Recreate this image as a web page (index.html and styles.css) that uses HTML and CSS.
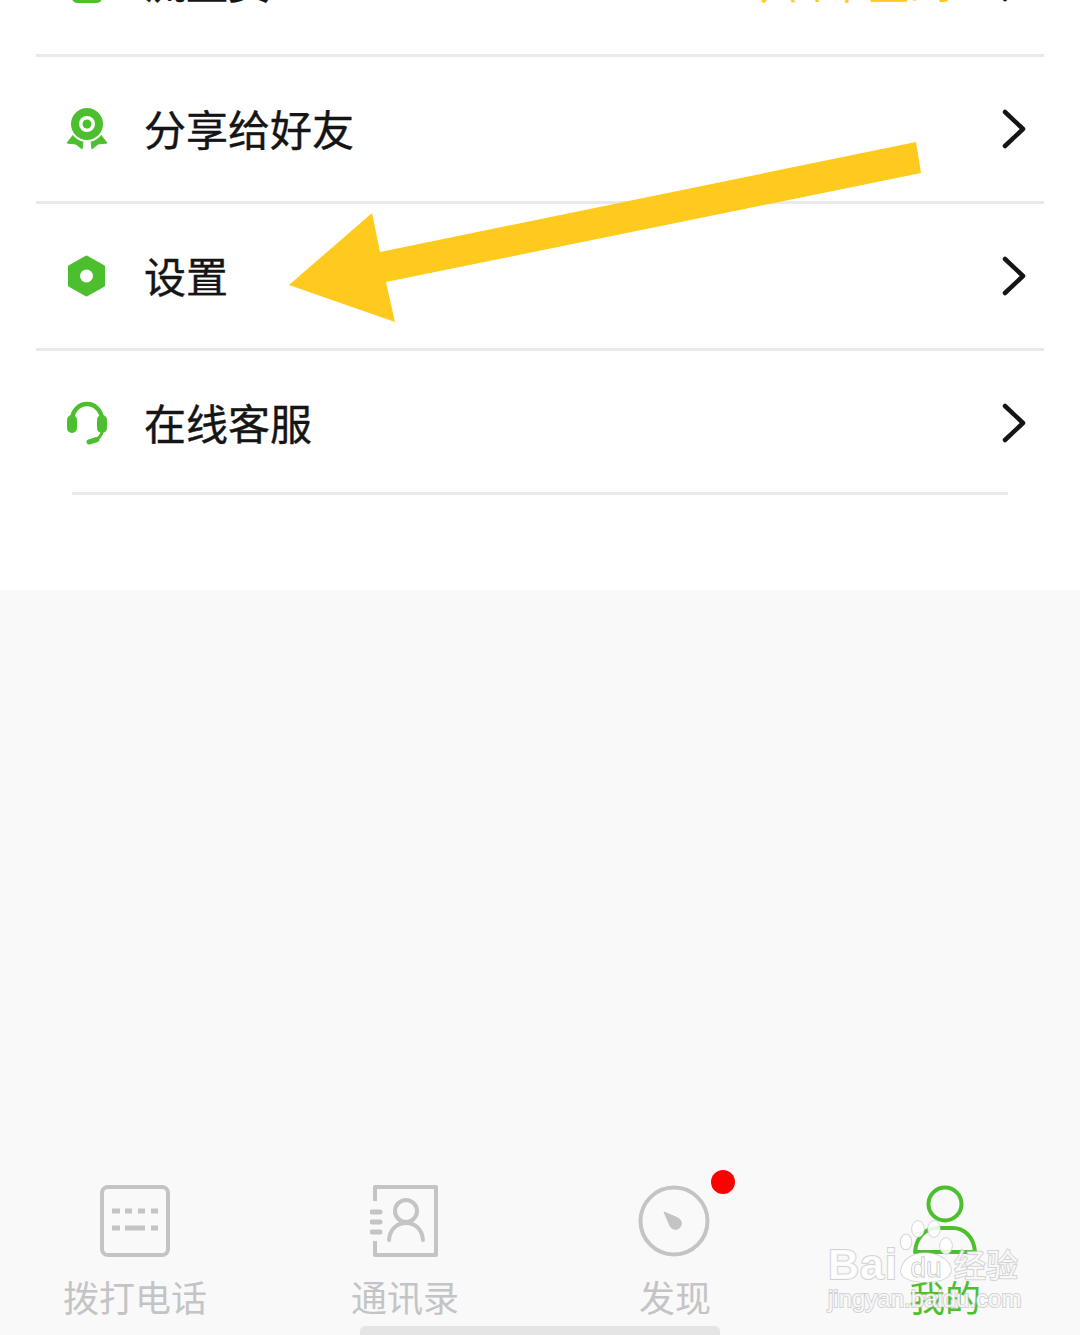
FILE: index.html
```html
<!DOCTYPE html>
<html lang="zh-CN">
  <head>
    <meta charset="UTF-8" />
    <meta name="viewport" content="width=device-width, initial-scale=1.0" />
    <title>我的</title>
    <link rel="stylesheet" href="styles.css">
  </head>
  <body>
    <div class="page">
      <div class="menu">
        <div class="menu-row">
          <svg class="row-icon" viewBox="0 0 40 44"><rect x="5" y="0" width="30" height="43" rx="5" fill="#4cbf2f" /></svg>
          <span class="row-label">流量费</span>
          <span class="row-value">今日未签到</span>
          <svg class="chevron" viewBox="0 0 24 40"><path d="M3 3 L21 20 L3 37" /></svg>
        </div>
        <div class="menu-row">
          <svg class="row-icon" viewBox="0 0 40 44">
            <path d="M7 27 L16 34 L15 42 L9 37 L0 36 Z" fill="#4cbf2f" stroke="#4cbf2f" stroke-linejoin="round" />
            <path d="M33 27 L24 34 L25 42 L31 37 L40 36 Z" fill="#4cbf2f" stroke="#4cbf2f" stroke-linejoin="round" />
            <circle cx="20" cy="17" r="18" fill="#fff" />
            <circle cx="20" cy="17" r="16" fill="#4cbf2f" />
            <circle cx="20" cy="17" r="8" fill="#fff" />
            <circle cx="20" cy="17" r="4.5" fill="#4cbf2f" />
          </svg>
          <span class="row-label">分享给好友</span>
          <svg class="chevron" viewBox="0 0 24 40"><path d="M3 3 L21 20 L3 37" /></svg>
        </div>
        <div class="menu-row">
          <svg class="row-icon" viewBox="0 0 40 44">
            <path d="M19.5 3 L36.5 12.5 V31.5 L19.5 41 L2.5 31.5 V12.5 Z" fill="#4cbf2f" stroke="#4cbf2f" stroke-width="3" stroke-linejoin="round" />
            <circle cx="19.5" cy="22" r="6.5" fill="#fff" />
          </svg>
          <span class="row-label">设置</span>
          <svg class="chevron" viewBox="0 0 24 40"><path d="M3 3 L21 20 L3 37" /></svg>
        </div>
        <div class="menu-row row-last">
          <svg class="row-icon" viewBox="0 0 40 44">
            <path d="M5 20 V19 A15 16 0 0 1 35 19 V20" fill="none" stroke="#4cbf2f" stroke-width="4.5" />
            <rect x="0" y="14" width="10" height="18" rx="5" fill="#4cbf2f" />
            <rect x="30" y="14" width="10" height="18" rx="5" fill="#4cbf2f" />
            <path d="M35 31 Q34 37 27 39" fill="none" stroke="#4cbf2f" stroke-width="3" />
            <path d="M22 41 L30 38.5" fill="none" stroke="#4cbf2f" stroke-width="5" stroke-linecap="round" />
          </svg>
          <span class="row-label">在线客服</span>
          <svg class="chevron" viewBox="0 0 24 40"><path d="M3 3 L21 20 L3 37" /></svg>
        </div>
      </div>

      <div class="tabbar">
        <div class="tab">
          <svg class="tab-icon" viewBox="0 0 70 72">
            <rect x="2" y="2" width="66" height="68" rx="6" fill="none" stroke="#c4c4c6" stroke-width="4" />
            <path d="M12 26 H20 M25 26 H32 M38 26 H45 M51 26 H58 M12 43 H20 M25 43 H45 M51 43 H58" fill="none" stroke="#c4c4c6" stroke-width="5" />
          </svg>
          <span class="tab-label">拨打电话</span>
        </div>
        <div class="tab">
          <svg class="tab-icon" viewBox="0 0 70 72">
            <path d="M5 16 V2 H66 V70 H5 V56" fill="none" stroke="#c4c4c6" stroke-width="4" stroke-linejoin="round" />
            <path d="M2 27 H10 M2 37 H10 M2 47 H10" fill="none" stroke="#c4c4c6" stroke-width="5" stroke-linecap="round" />
            <circle cx="36" cy="26" r="11" fill="none" stroke="#c4c4c6" stroke-width="4" />
            <path d="M19 55 C20 43 28 38 36 38 C44 38 52 43 53 55" fill="none" stroke="#c4c4c6" stroke-width="4" stroke-linecap="round" />
          </svg>
          <span class="tab-label">通讯录</span>
        </div>
        <div class="tab">
          <svg class="tab-icon tab-icon-round" viewBox="0 0 72 72">
            <circle cx="36" cy="36" r="33.5" fill="none" stroke="#c4c4c6" stroke-width="4" />
            <path d="M26 27 L40 33 A6 6 0 1 1 32 41 Z" fill="#c4c4c6" stroke="#c4c4c6" stroke-linejoin="round" />
          </svg>
          <span class="tab-label">发现</span>
          <span class="tab-dot"></span>
        </div>
        <div class="tab tab-active">
          <svg class="tab-icon" viewBox="0 0 70 72">
            <circle cx="35" cy="19" r="16.5" fill="none" stroke="#4cbf2f" stroke-width="4" />
            <path d="M5 67 C6 52 16 43 27 43 H43 C54 43 64 52 65 67 Z" fill="none" stroke="#4cbf2f" stroke-width="4" stroke-linejoin="round" />
          </svg>
          <span class="tab-label">我的</span>
        </div>
      </div>

      <div class="home-bar"></div>

      <!-- annotation arrow drawn over the screenshot -->
      <svg class="arrow" viewBox="0 0 1080 1335"><polygon points="916,142 921,173 386,282 395,322 289,285 372,213 380,252" fill="#fdca1d" /></svg>

      <!-- watermark -->
      <div class="watermark">
        <div class="wm-top">
          <span class="wm-bai">Bai</span>
          <svg class="wm-paw" viewBox="0 0 56 63">
            <ellipse cx="8" cy="22" rx="5.5" ry="7.5" />
            <ellipse cx="20" cy="9" rx="6" ry="8" />
            <ellipse cx="36" cy="9" rx="6" ry="8" />
            <ellipse cx="48" cy="26" rx="6" ry="8" />
            <path d="M3 50 C5 38 17 33 27 33 C38 33 52 39 53 50 C53 59 40 62 28 62 C15 62 2 59 3 50 Z" />
            <text class="wm-du" x="28" y="57">du</text>
          </svg>
          <span class="wm-zh">经验</span>
        </div>
        <div class="wm-url">jingyan.baidu.com</div>
      </div>
    </div>
  </body>
</html>
```

FILE: styles.css
```css
body {
  margin: 0;
  padding: 0;
  background-color: #fff;
  font-family: "Noto Sans CJK SC", "Noto Sans", sans-serif;
}

.page {
  width: 1080px;
  height: 1335px;
  position: relative;
  overflow: hidden;
  background-color: #f9f9f9;
  display: flex;
  flex-direction: column;
}

/* Menu list, first row runs off the top of the picture */
.menu {
  height: 680px;
  box-sizing: border-box;
  background-color: #fff;
  padding: 0 36px;
  margin-top: -90px;
  flex-shrink: 0;
}

.menu-row {
  height: 147px;
  box-sizing: border-box;
  border-bottom: 3px solid #e9e9ec;
  display: flex;
  align-items: center;
  padding-left: 30px;
  padding-right: 18px;
}

.row-last {
  border-bottom: 0;
  height: 144px;
  position: relative;
}

.row-last::after {
  content: "";
  position: absolute;
  left: 36px;
  right: 36px;
  bottom: 0;
  height: 3px;
  background-color: #e9e9ec;
}

.row-icon {
  width: 42px;
  height: 44px;
  margin-right: 36px;
  flex-shrink: 0;
}

.row-label {
  font-size: 42px;
  color: #151515;
  -webkit-text-stroke: 0.4px #151515;
  flex: 1;
  padding-bottom: 4px;
}

.row-value {
  font-size: 42px;
  color: #fdca1d;
  margin-right: 50px;
  padding-bottom: 4px;
}

.chevron {
  width: 24px;
  height: 40px;
  fill: none;
  stroke: #151515;
  stroke-width: 4.5;
  stroke-linecap: round;
  stroke-linejoin: round;
}

/* Bottom tabs */
.tabbar {
  margin-top: auto;
  height: 150px;
  display: flex;
  position: relative;
}

.tab {
  position: relative;
  width: 270px;
  display: flex;
  flex-direction: column;
  align-items: center;
}

.tab-icon {
  width: 70px;
  height: 72px;
}

.tab-icon-round {
  width: 72px;
  margin-left: -2px;
}

.tab-label {
  font-size: 36px;
  line-height: 50px;
  margin-top: 14px;
  color: #c4c4c6;
}

.tab-active .tab-label {
  color: #4cbf2f;
}

.tab-dot {
  position: absolute;
  top: -15px;
  left: 171px;
  width: 24px;
  height: 24px;
  border-radius: 50%;
  background-color: #fe0000;
}

.home-bar {
  position: absolute;
  left: 360px;
  bottom: 0;
  width: 360px;
  height: 9px;
  border-radius: 5px 5px 0 0;
  background-color: #e5e5e5;
}

/* Overlays */
.arrow {
  position: absolute;
  top: 0;
  left: 0;
  width: 1080px;
  height: 1335px;
}

.watermark {
  position: absolute;
  left: 828px;
  top: 1220px;
  width: 196px;
  color: rgba(255, 255, 255, 0.85);
  -webkit-text-stroke: 2px rgba(195, 195, 195, 0.7);
  paint-order: stroke fill;
}

.wm-top {
  display: flex;
  align-items: flex-end;
  height: 63px;
}

.wm-bai {
  font-family: "Liberation Sans", sans-serif;
  font-size: 43px;
  line-height: 50px;
  font-weight: 700;
  letter-spacing: 1px;
  margin-bottom: -6px;
  flex-shrink: 0;
}

.wm-paw {
  width: 56px;
  height: 63px;
  fill: rgba(255, 255, 255, 0.85);
  stroke: rgba(195, 195, 195, 0.8);
  stroke-width: 1.5;
  flex-shrink: 0;
}

.wm-du {
  font-family: "Liberation Sans", sans-serif;
  font-size: 28px;
  text-anchor: middle;
  fill: rgba(255, 255, 255, 0.6);
  stroke: rgba(170, 170, 170, 0.8);
  stroke-width: 1;
}

.wm-zh {
  font-size: 32px;
  line-height: 44px;
  margin-bottom: -2px;
  white-space: nowrap;
  flex-shrink: 0;
}

.wm-url {
  font-family: "Liberation Sans", sans-serif;
  font-size: 24px;
  line-height: 28px;
  margin-top: 2px;
  white-space: nowrap;
}
```
